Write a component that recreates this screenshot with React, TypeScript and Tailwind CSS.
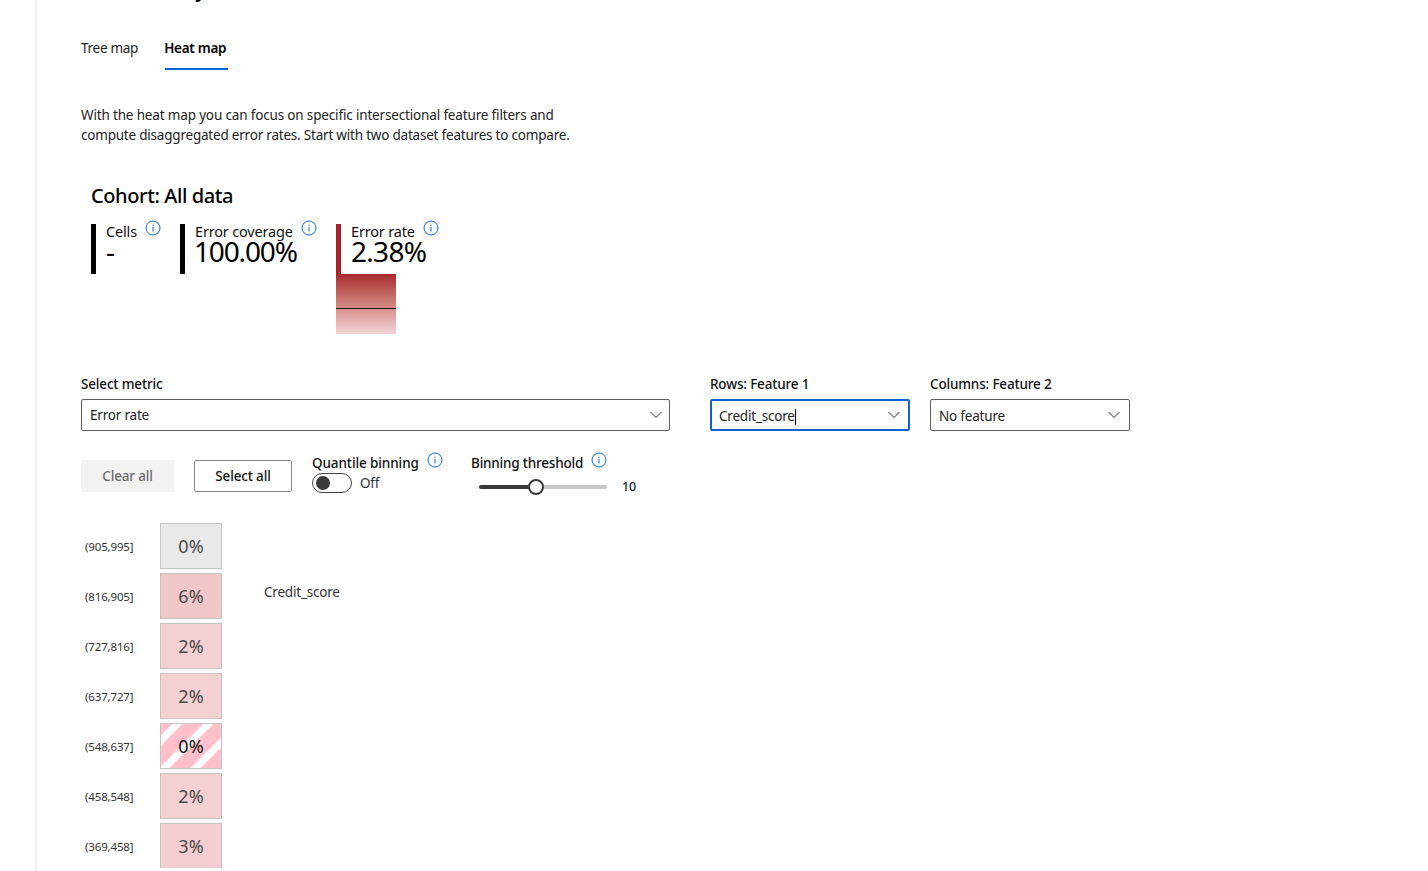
import React from "react";

const font = { fontFamily: '"Noto Sans", sans-serif' };

function Info({ className = "" }: { className?: string }) {
  return (
    <svg width="16" height="16" viewBox="0 0 16 16" className={className} fill="none">
      <circle cx="8" cy="8" r="7" stroke="#0f6cdd" strokeWidth="1" />
      <rect x="7.5" y="7" width="1" height="4.5" fill="#0f6cdd" />
      <rect x="7.5" y="4.6" width="1" height="1.2" fill="#0f6cdd" />
    </svg>
  );
}

function Chevron() {
  return (
    <svg width="12" height="8" viewBox="0 0 12 8" fill="none">
      <path d="M0.5 1 L6 6.5 L11.5 1" stroke="#333" strokeWidth="1" />
    </svg>
  );
}

function Metric({ label, value, bar, valueClass }: { label: string; value: string; bar: string; valueClass: string }) {
  return (
    <div className="flex">
      <div className={`w-[5px] h-[50px] ${bar}`} />
      <div className="ml-2.5 -mt-px">
        <div className="text-[14.5px] leading-[16px] tracking-[-0.17px] text-[#111]">{label}</div>
        <div className={`-mt-px text-[28px] leading-[26px] text-black ${valueClass}`}>{value}</div>
      </div>
    </div>
  );
}

function Select({
  text,
  nudge,
  cursor,
  box,
}: {
  text: string;
  nudge?: boolean;
  cursor?: boolean;
  box: string;
}) {
  return (
    <div className={`w-full h-8 flex items-center justify-between rounded-[2px] ${box}`}>
      <span className={`text-[13.5px] tracking-[-0.2px] text-[#222] ${nudge ? "pt-[2px]" : ""}`}>
        {text}
        {cursor && <span className="inline-block w-px h-4 bg-black align-middle" />}
      </span>
      <Chevron />
    </div>
  );
}

const rows = [
  { label: "(905,995]", value: "0%", bg: "bg-[#e9e9e9]" },
  { label: "(816,905]", value: "6%", bg: "bg-[#f2c7c9]" },
  { label: "(727,816]", value: "2%", bg: "bg-[#f3d0d2]" },
  { label: "(637,727]", value: "2%", bg: "bg-[#f3d0d2]" },
  {
    label: "(548,637]",
    value: "0%",
    bg: "bg-[repeating-linear-gradient(135deg,#ffc0cb_0px,#ffc0cb_7px,#ffffff_9px,#ffffff_14px,#ffc0cb_16px,#ffc0cb_22px)]",
    dark: true,
  },
  { label: "(458,548]", value: "2%", bg: "bg-[#f3d0d2]" },
  { label: "(369,458]", value: "3%", bg: "bg-[#f3cdcf]" },
];

const label = "text-[13.5px] leading-[20px] font-medium tracking-[-0.17px] text-[#111]";

export default function App() {
  return (
    <div className="h-[871px] w-[1428px] overflow-hidden bg-white text-[#222]" style={font}>
      <div className="ml-[35px] h-full border-l-2 border-[#f1f0ef] pl-11 flex flex-col">
        <div className="h-0 overflow-visible">
          <div className="-mt-[23px] ml-[18px] text-[20px] font-semibold leading-[26px] text-black">Error analysis</div>
        </div>
        {/* Tabs */}
        <div className="flex gap-[27px] pt-[38px] h-[71px] text-[13.5px] tracking-[-0.28px]">
          <div className="leading-[20px] text-[#222]">Tree map</div>
          <div className="flex flex-col w-[63px]">
            <div className="-ml-px leading-[20px] font-semibold text-black">Heat map</div>
            <div className="mt-[10px] h-0.5 bg-[#0f62d6]" />
          </div>
        </div>
        {/* Description */}
        <p className="mt-[34px] w-[520px] text-[13.5px] leading-[20px] text-[#222]">
          <span className="tracking-[-0.16px]">
            With the heat map you can focus on specific intersectional feature filters and
          </span>
          <br />
          <span className="tracking-[-0.21px]">
            compute disaggregated error rates. Start with two dataset features to compare.
          </span>
        </p>
        {/* Cohort */}
        <div className="ml-2.5 mt-[37px]">
          <h2 className="text-[20px] leading-[28px] font-medium tracking-[-0.4px] text-black">Cohort: All data</h2>
          <div className="flex mt-[14px] h-[110px]">
            <div className="relative w-[89px]">
              <Metric label="Cells" value="-" bar="bg-black" valueClass="tracking-[-0.9px]" />
              <Info className="absolute left-[54px] -top-[4px]" />
            </div>
            <div className="relative w-[156px]">
              <Metric label="Error coverage" value="100.00%" bar="bg-black" valueClass="-ml-px tracking-[-1.15px]" />
              <Info className="absolute left-[121px] -top-[4px]" />
            </div>
            <div className="relative">
              <Metric label="Error rate" value="2.38%" bar="bg-[#a4262c]" valueClass="tracking-[-0.7px]" />
              <Info className="absolute left-[87px] -top-[4px]" />
              <div className="relative w-[60px] h-[60px] bg-gradient-to-b from-[#a4262c] to-[#f3d6d8]">
                <div className="absolute left-0 right-0 top-[34px] h-px bg-[#111]" />
              </div>
            </div>
          </div>
        </div>
        {/* Selects */}
        <div className="flex mt-[40px]">
          <div className="w-[589px]">
            <div className={label}>Select metric</div>
            <div className="mt-[5px]">
              <Select text="Error rate" box="border border-[#605e5c] pl-2 pr-[7px]" />
            </div>
          </div>
          <div className="ml-10 w-[200px]">
            <div className={label}>Rows: Feature 1</div>
            <div className="mt-[5px]">
              <Select text="Credit_score" nudge cursor box="border-2 border-[#0f62d6] pl-[7px] pr-[8px]" />
            </div>
          </div>
          <div className="ml-5 w-[200px]">
            <div className={label}>Columns: Feature 2</div>
            <div className="mt-[5px]">
              <Select text="No feature" nudge box="border border-[#605e5c] pl-2 pr-[9px]" />
            </div>
          </div>
        </div>
        {/* Controls */}
        <div className="flex mt-[19px] h-[73px]">
          <div className="mt-2.5 w-[93px] h-8 rounded-[2px] bg-[#f3f2f1] flex items-center justify-center text-[13.5px] font-medium tracking-[-0.17px] text-[#6b6b6b]">
            Clear all
          </div>
          <div className="mt-2.5 ml-5 w-[98px] h-8 rounded-[2px] border border-[#8a8886] flex items-center justify-center text-[13.5px] font-medium tracking-[-0.15px] text-[#111]">
            Select all
          </div>
          <div className="ml-5 w-[159px] relative">
            <div className="mt-[3px] text-[13.5px] leading-[20px] font-medium tracking-[-0.1px] text-[#111]">Quantile binning</div>
            <Info className="absolute left-[115px] top-[2px]" />
            <div className="flex items-center">
              <div className="w-10 h-5 rounded-full border border-[#444] flex items-center pl-[3px]">
                <div className="w-3.5 h-3.5 rounded-full bg-[#3b3a39]" />
              </div>
              <span className="ml-2 text-[13.5px] tracking-[-0.2px] text-[#333]">Off</span>
            </div>
          </div>
          <div className="relative w-[180px]">
            <div className="mt-[3px] text-[13.5px] leading-[20px] font-medium tracking-[-0.2px] text-[#111]">Binning threshold</div>
            <Info className="absolute left-[120px] top-[2px]" />
            <div className="flex items-center ml-2 mt-[4px]">
              <div className="relative w-[128px] h-1 rounded-full bg-[#c8c6c4]">
                <div className="absolute left-0 top-0 h-1 w-[56px] rounded-full bg-[#3b3a39]" />
                <div className="absolute left-[49px] -top-[6px] w-4 h-4 rounded-full bg-white border-2 border-[#3b3a39]" />
              </div>
              <span className="ml-[15px] pt-px text-[12.5px] font-medium tracking-[-0.2px] text-[#222]">10</span>
            </div>
          </div>
        </div>
        {/* Heat map */}
        <div className="flex h-[345px] overflow-hidden">
          <div className="flex flex-col gap-1 w-[141px]">
            {rows.map((r, i) => (
              <div key={i} className="flex items-center shrink-0">
                <span className="ml-1 w-[75px] pt-px text-[11.5px] leading-4 tracking-[-0.15px] text-[#333]">{r.label}</span>
                <div
                  className={`w-[62px] h-[46px] border border-[#c4c4c4] flex items-center justify-center text-[18px] ${r.bg} ${
                    r.dark ? "text-[#111]" : "text-[#4a4a4a]"
                  }`}
                >
                  {r.value}
                </div>
              </div>
            ))}
          </div>
          <div className="ml-[42px] mt-[59px] text-[13.5px] leading-5 tracking-[-0.2px] text-[#333]">Credit_score</div>
        </div>
      </div>
    </div>
  );
}
